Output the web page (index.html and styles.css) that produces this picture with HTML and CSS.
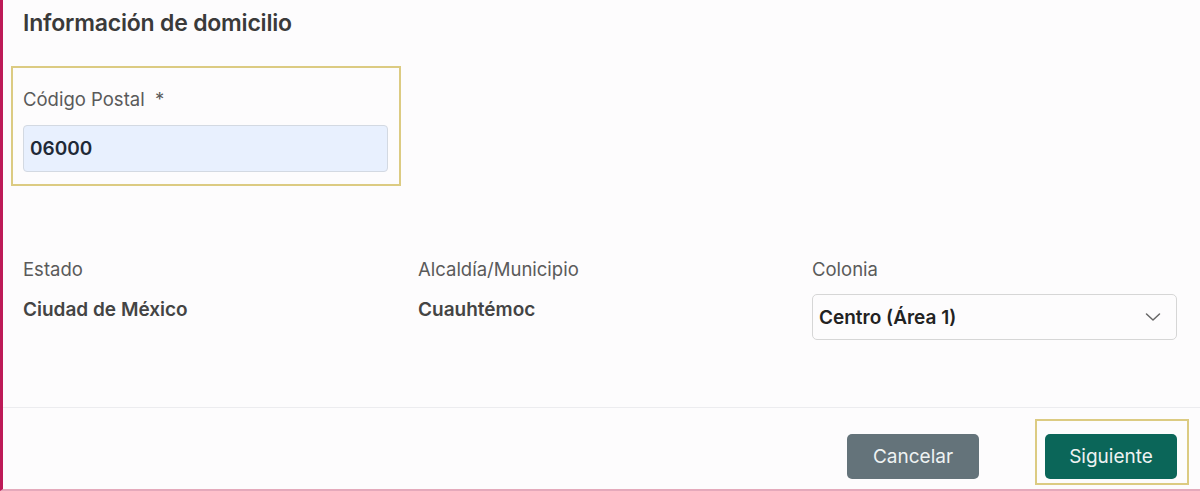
FILE: index.html
```html
<!DOCTYPE html>
<html lang="es">
<head>
<meta charset="utf-8">
<title>Información de domicilio</title>
<link rel="stylesheet" href="styles.css">
</head>
<body>
<div class="page">
  <div class="content">
    <h2 class="title">Información de domicilio</h2>
    <div class="highlight cp-box">
      <label class="label" for="cp">Código Postal &nbsp;*</label>
      <div class="input">06000</div>
    </div>
    <div class="grid">
      <div class="field">
        <div class="label">Estado</div>
        <div class="value">Ciudad de México</div>
      </div>
      <div class="field">
        <div class="label">Alcaldía/Municipio</div>
        <div class="value">Cuauhtémoc</div>
      </div>
      <div class="field">
        <div class="label">Colonia</div>
        <div class="select">
          <span>Centro (Área 1)</span>
          <svg class="chev" width="16" height="10" viewBox="0 0 16 10"><path d="M1.5 2 L8 8 L14.5 2" fill="none" stroke="#666" stroke-width="1.5" stroke-linecap="round" stroke-linejoin="round"/></svg>
        </div>
      </div>
    </div>
  </div>
  <div class="footer">
    <button class="btn btn-cancel">Cancelar</button>
    <div class="highlight next-box">
      <button class="btn btn-next">Siguiente</button>
    </div>
  </div>
</div>
</body>
</html>
```
FILE: styles.css
```css
* { box-sizing: border-box; }
html, body { margin: 0; padding: 0; }
body {
  background: #fdfcfd;
  font-family: Inter, "Noto Sans", sans-serif;
  color: #333;
}
.page {
  width: 1200px;
  height: 491px;
  border-left: 3px solid #bd1a57;
  border-bottom: 2px solid #e5a9bb;
  display: flex;
  flex-direction: column;
}
.content {
  flex: 1;
  padding: 10px 0 0 20px;
  border-bottom: 1px solid #ececef;
}
.title {
  margin: 0;
  font-size: 23px;
  font-weight: 600;
  line-height: 26px;
  color: #3a3a3a;
  letter-spacing: -0.2px;
}
.highlight {
  border: 2px solid #dccb82;
}
.cp-box {
  margin: 30px 0 0 -12px;
  width: 390px;
  height: 120px;
  padding: 20px 11px 0 10px;
}
.label {
  display: block;
  font-size: 18.5px;
  line-height: 22px;
  color: #5a5a5a;
}
.input {
  margin-top: 15px;
  height: 47px;
  background: #e8f0fe;
  border: 1px solid #d3d9e2;
  border-radius: 4px;
  padding: 0 6px;
  display: flex;
  align-items: center;
  font-size: 19px;
  font-weight: 600;
  color: #1f2937;
}
.grid {
  display: grid;
  grid-template-columns: 395px 394px 365px;
  margin-top: 72px;
}
.value {
  margin-top: 19px;
  font-size: 19px;
  line-height: 22px;
  font-weight: 600;
  color: #444;
}
.select {
  margin-top: 14px;
  height: 46px;
  border: 1px solid #d6d6d6;
  border-radius: 5px;
  padding: 0 15px 0 6px;
  display: flex;
  align-items: center;
  justify-content: space-between;
  font-size: 19px;
  font-weight: 600;
  color: #222;
}
.footer {
  height: 81px;
  display: flex;
  align-items: flex-start;
  justify-content: flex-end;
  padding: 11px 11px 0 0;
}
.btn {
  width: 132px;
  height: 45px;
  border: none;
  border-radius: 5px;
  font-family: Inter, "Noto Sans", sans-serif;
  font-size: 19px;
  color: #eef2f2;
}
.btn-cancel {
  background: #64737a;
  margin-top: 15px;
  margin-right: 56px;
}
.next-box {
  padding: 13px 10px 4px 8px;
}
.btn-next {
  background: #0b6659;
  display: block;
}
```
